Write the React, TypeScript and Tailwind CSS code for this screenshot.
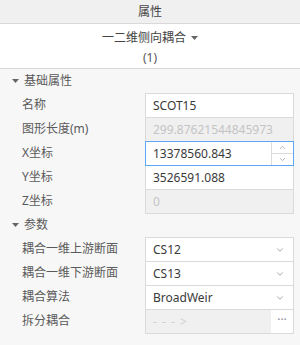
import { ChevronDown, ChevronUp } from 'lucide-react'

const font = { fontFamily: '"Noto Sans", "Noto Sans CJK SC", sans-serif' }

function Caret() {
  return (
    <svg width="7" height="4" viewBox="0 0 7 4" className="shrink-0">
      <path d="M0 0h7L3.5 4z" fill="#666" />
    </svg>
  )
}

function Section({ title }: { title: string }) {
  return (
    <div className="h-6 flex items-center pl-[12px] gap-[5px] text-[12px] text-[#5a5a5a]">
      <Caret />
      <span>{title}</span>
    </div>
  )
}

function Row({ label, children }: { label: string; children: React.ReactNode }) {
  return (
    <div className="h-6 flex items-start">
      <div className="w-[145px] shrink-0 pl-[22px] h-6 flex items-center text-[12px] text-[#5a5a5a]">{label}</div>
      <div className="w-[149px] h-[25px] relative">{children}</div>
    </div>
  )
}

function TextBox({ value, disabled }: { value: string; disabled?: boolean }) {
  return (
    <div
      className={
        'h-full border border-[#dadada] flex items-center pl-[7px] text-[12px] ' +
        (disabled ? 'bg-[#f0f0f0] text-[#c4c4c4]' : 'bg-white text-[#3a3a3a]')
      }
    >
      {value}
    </div>
  )
}

function SpinBox({ value }: { value: string }) {
  return (
    <div className="absolute inset-0 z-10 border border-[#5aa8f5] bg-white flex text-[12px] text-[#3a3a3a]">
      <div className="flex-1 flex items-center pl-[7px]">{value}</div>
      <div className="w-[22px] border-l border-[#dcdcdc] flex flex-col">
        <div className="flex-1 flex items-center justify-center border-b border-[#dcdcdc]">
          <ChevronUp size={9} color="#9a9dab" strokeWidth={2} />
        </div>
        <div className="flex-1 flex items-center justify-center">
          <ChevronDown size={9} color="#9a9dab" strokeWidth={2} />
        </div>
      </div>
    </div>
  )
}

function Select({ value }: { value: string }) {
  return (
    <div className="h-full border border-[#dadada] bg-white flex items-center pl-[7px] pr-[8px] text-[12px] text-[#3a3a3a]">
      <span className="flex-1">{value}</span>
      <ChevronDown size={10} color="#9a9dab" strokeWidth={2.2} />
    </div>
  )
}

function PickBox() {
  return (
    <div className="h-full border border-[#dadada] flex text-[12px]">
      <div className="flex-1 bg-[#f0f0f0] flex items-center pl-[7px] text-[#cfcfcf] tracking-[1px]">- - - &gt;</div>
      <div className="w-[22px] bg-white flex items-center justify-center text-[#8a8d99] leading-none pb-[3px]">···</div>
    </div>
  )
}

export default function App() {
  return (
    <div className="w-[300px] h-[345px] bg-[#f7f7f7] overflow-hidden" style={font}>
      <div className="h-6 bg-[#f0f0f0] border-b border-[#d9d9d9] flex items-center justify-center text-[12px] text-[#444]">
        属性
      </div>
      <div className="h-[45px] bg-white border-b border-[#d9d9d9] flex flex-col items-center text-[12px] text-[#444]">
        <div className="flex items-center gap-[5px] mt-[4px] h-5">
          <span>一二维侧向耦合</span>
          <Caret />
        </div>
        <div className="h-5 mt-px text-[#555]">(1)</div>
      </div>

      <Section title="基础属性" />
      <Row label="名称"><TextBox value="SCOT15" /></Row>
      <Row label="图形长度(m)"><TextBox value="299.87621544845973" disabled /></Row>
      <Row label="X坐标"><SpinBox value="13378560.843" /></Row>
      <Row label="Y坐标"><TextBox value="3526591.088" /></Row>
      <Row label="Z坐标"><TextBox value="0" disabled /></Row>

      <Section title="参数" />
      <Row label="耦合一维上游断面"><Select value="CS12" /></Row>
      <Row label="耦合一维下游断面"><Select value="CS13" /></Row>
      <Row label="耦合算法"><Select value="BroadWeir" /></Row>
      <Row label="拆分耦合"><PickBox /></Row>
    </div>
  )
}
